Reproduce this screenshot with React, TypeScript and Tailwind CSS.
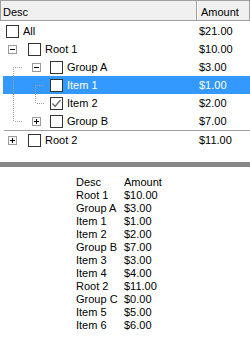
import type { ReactNode } from "react";

type Row = {
  label: string;
  amount: string;
  gutter: number; // width before the checkbox, from x=3
  guides?: ReactNode;
  checked?: boolean;
  selected?: boolean;
  divider?: boolean;
};

const GUIDE = "#a0a0a0";

// 1px dotted line drawn with small rects so it stays crisp
function Dots({ x, y1, y2, horizontal }: { x: number; y1: number; y2: number; horizontal?: boolean }) {
  const dots: ReactNode[] = [];
  for (let p = y1; p < y2; p += 2) {
    dots.push(
      horizontal ? (
        <rect key={p} x={p} y={x} width={1} height={1} fill={GUIDE} />
      ) : (
        <rect key={p} x={x} y={p} width={1} height={1} fill={GUIDE} />
      )
    );
  }
  return <>{dots}</>;
}

function Expander({ x, open }: { x: number; open: boolean }) {
  return (
    <>
      <rect x={x + 0.5} y={5.5} width={8} height={8} fill="#fff" stroke="#9a9a9a" />
      <rect x={x + 2} y={9} width={5} height={1} fill="#000" />
      {!open && <rect x={x + 4} y={7} width={1} height={5} fill="#000" />}
    </>
  );
}

const rows: Row[] = [
  { label: "All", amount: "$21.00", gutter: 3 },
  { label: "Root 1", amount: "$10.00", gutter: 25, guides: <Expander x={5} open /> },
  {
    label: "Group A",
    amount: "$3.00",
    gutter: 47,
    guides: (
      <>
        <Dots x={10} y1={9} y2={18} />
        <Dots x={9} y1={12} y2={20} horizontal />
        <Expander x={29} open />
      </>
    ),
  },
  {
    label: "Item 1",
    amount: "$1.00",
    gutter: 47,
    selected: true,
    guides: (
      <>
        <Dots x={10} y1={0} y2={18} />
        <Dots x={32} y1={9} y2={18} />
        <Dots x={9} y1={34} y2={42} horizontal />
      </>
    ),
  },
  {
    label: "Item 2",
    amount: "$2.00",
    gutter: 47,
    checked: true,
    guides: (
      <>
        <Dots x={10} y1={0} y2={18} />
        <Dots x={32} y1={0} y2={10} />
        <Dots x={9} y1={34} y2={42} horizontal />
      </>
    ),
  },
  {
    label: "Group B",
    amount: "$7.00",
    gutter: 47,
    divider: true,
    guides: (
      <>
        <Dots x={10} y1={0} y2={10} />
        <Dots x={9} y1={12} y2={20} horizontal />
        <Expander x={29} open={false} />
      </>
    ),
  },
  { label: "Root 2", amount: "$11.00", gutter: 25, guides: <Expander x={5} open={false} /> },
];

const listing = [
  ["Desc", "Amount"],
  ["Root 1", "$10.00"],
  ["Group A", "$3.00"],
  ["Item 1", "$1.00"],
  ["Item 2", "$2.00"],
  ["Group B", "$7.00"],
  ["Item 3", "$3.00"],
  ["Item 4", "$4.00"],
  ["Root 2", "$11.00"],
  ["Group C", "$0.00"],
  ["Item 5", "$5.00"],
  ["Item 6", "$6.00"],
];

function CheckBox({ checked }: { checked?: boolean }) {
  return (
    <div className="flex h-[13px] w-[13px] shrink-0 items-center justify-center border border-[#333] bg-white">
      {checked && (
        <svg width="11" height="11" viewBox="0 0 11 11">
          <path d="M1.5 5.5 L4 8.5 L9.5 2" fill="none" stroke="#6a6a6a" strokeWidth="1.3" />
        </svg>
      )}
    </div>
  );
}

function TreeRow({ row }: { row: Row }) {
  return (
    <>
      <div className="pl-[3px]">
        <div className={`flex h-[18px] items-center ${row.selected ? "bg-[#3399ff] text-white" : "text-black"}`}>
          <div className="flex w-[194px] items-center">
            <svg width={row.gutter} height="18" className="shrink-0" shapeRendering="crispEdges">
              {row.guides}
            </svg>
            <CheckBox checked={row.checked} />
            <span className="ml-[4px] leading-[13px]">{row.label}</span>
          </div>
          <span className="pl-[2px] leading-[13px]">{row.amount}</span>
        </div>
      </div>
      {row.divider && <div className="ml-[4px] h-px bg-[#a0a0a0]" />}
    </>
  );
}

export default function App() {
  return (
    <div className="h-[343px] w-[250px] overflow-hidden bg-white text-[11px] text-black [font-family:'Liberation_Sans',Arial,sans-serif]">
      {/* 表头 */}
      <div className="flex h-[21px] border border-[#a0a0a0] bg-[#f0f0f0]">
        <div className="w-[196px] border-r border-[#a0a0a0] pl-[2px] pt-[5px] leading-[13px]">Desc</div>
        <div className="flex-1 border-l border-white pl-[3px] pt-[5px] leading-[13px]">Amount</div>
      </div>

      {/* 树形列表 */}
      <div className="pt-px">
        {rows.map((row) => (
          <TreeRow key={row.label} row={row} />
        ))}
      </div>

      <div className="mt-[13px] h-[5px] bg-[#878787]" />

      {/* 导出的文本 */}
      <div className="ml-[76px] mt-[9px] grid grid-cols-[48px_auto] leading-[13px]">
        {listing.map(([desc, amount]) => (
          <div key={desc} className="contents">
            <span>{desc}</span>
            <span>{amount}</span>
          </div>
        ))}
      </div>
    </div>
  );
}
